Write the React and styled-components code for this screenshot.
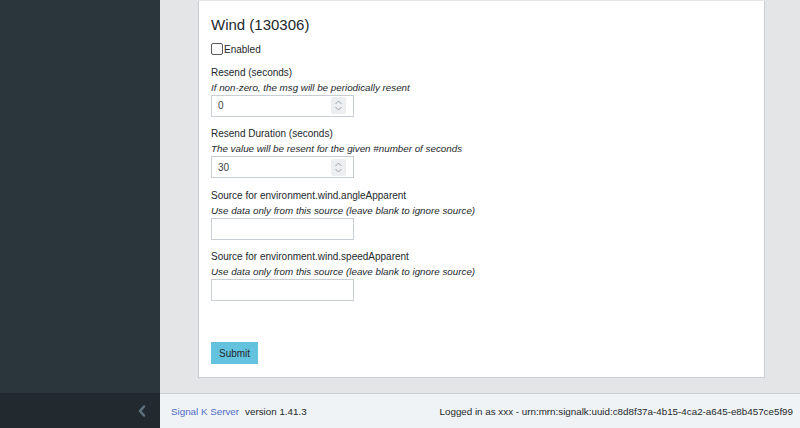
import React from 'react';
import styled, { createGlobalStyle } from 'styled-components';

const GlobalStyle = createGlobalStyle`
  html, body { margin: 0; padding: 0; }
  body {
    font-family: "Liberation Sans", Arial, sans-serif;
    color: #23282c;
    background: #e4e5e6;
  }
  * { box-sizing: border-box; }
`

const Layout = styled.div`
  display: grid;
  grid-template-columns: 160px 1fr;
  grid-template-rows: 1fr 35px;
  width: 800px;
  height: 428px;
  overflow: hidden;
`

const Sidebar = styled.div`
  background-color: #2b353c;
`

const Minimizer = styled.button`
  display: flex;
  align-items: center;
  justify-content: flex-end;
  padding: 0 14px 0 0;
  border: none;
  background-color: #232a2f;
  cursor: pointer;
`

const Main = styled.main`
  background-color: #e4e5e6;
  padding: 0 35px 15px 38px;
  display: flex;
  flex-direction: column;
  justify-content: flex-end;
  overflow: hidden;
`

const Card = styled.div`
  background: #fff;
  border: 1px solid #c8ced3;
  border-top: none;
  padding: 15px 12px 13px;
`

const Title = styled.h4`
  margin: 0 0 8px;
  font-size: 15px;
  line-height: 18px;
  font-weight: 400;
`

const CheckRow = styled.label`
  display: flex;
  align-items: center;
  height: 15px;
  font-size: 10px;
  margin-bottom: 8px;
`

const CheckBox = styled.span`
  width: 12px;
  height: 12px;
  border: 1px solid #5a5a5a;
  border-radius: 2px;
  margin-right: 1px;
  background: #fff;
`

const Group = styled.div`
  margin-bottom: ${p => p.last ? '41px' : '9.5px'};
`

const Label = styled.div`
  font-size: 10px;
  line-height: 15px;
`

const Help = styled.div`
  font-size: 9.8px;
  line-height: 15px;
  font-style: italic;
`

const Field = styled.div`
  display: flex;
  align-items: center;
  width: 143px;
  height: 22px;
  border: 1px solid #c8ced3;
  background: #fff;
  padding: 0 7px 0 6px;
`

const Input = styled.input`
  flex: 1;
  min-width: 0;
  border: none;
  outline: none;
  padding: 0;
  font-family: inherit;
  font-size: 10px;
  color: #3a4248;
  background: transparent;
`

const Spinner = styled.span`
  display: flex;
  align-items: center;
  justify-content: center;
  width: 15px;
  height: 17px;
  background: #eceef0;
  border-radius: 2px;
`

const Button = styled.button`
  height: 22px;
  padding: 0 7px;
  border: 1px solid #63c2de;
  background-color: #63c2de;
  color: #23282c;
  font-family: inherit;
  font-size: 10px;
`

const Footer = styled.footer`
  display: flex;
  align-items: center;
  justify-content: space-between;
  padding: 0 7px 0 11px;
  background: #f0f3f5;
  border-top: 1px solid #c8ced3;
  font-size: 9.8px;
  color: #23282c;
`

const Link = styled.a`
  color: #4f6ec6;
  text-decoration: none;
  margin-right: 6px;
`

const Chevron = () => (
  <svg width="8" height="12" viewBox="0 0 8 12">
    <path d="M6 1.5L2 6l4 4.5" fill="none" stroke="#5f7482" strokeWidth="2.4" strokeLinecap="round" strokeLinejoin="round" />
  </svg>
)

const SpinIcon = () => (
  <svg width="9" height="13" viewBox="0 0 9 13">
    <path d="M1.5 5L4.5 2l3 3M1.5 8l3 3 3-3" fill="none" stroke="#9aa3ab" strokeWidth="1" />
  </svg>
)

const fields = [
  { label: 'Resend (seconds)', help: 'If non-zero, the msg will be periodically resent', value: '0', number: true },
  { label: 'Resend Duration (seconds)', help: 'The value will be resent for the given #number of seconds', value: '30', number: true },
  { label: 'Source for environment.wind.angleApparent', help: 'Use data only from this source (leave blank to ignore source)', value: '' },
  { label: 'Source for environment.wind.speedApparent', help: 'Use data only from this source (leave blank to ignore source)', value: '' },
]

export default function App() {
  return (
    <Layout>
      <GlobalStyle />
      <Sidebar />
      <Main>
        <Card>
          <Title>Wind (130306)</Title>
          <CheckRow>
            <CheckBox />
            Enabled
          </CheckRow>
          {fields.map((f, i) => (
            <Group key={f.label} last={i === fields.length - 1}>
              <Label>{f.label}</Label>
              <Help>{f.help}</Help>
              <Field>
                <Input defaultValue={f.value} />
                {f.number && <Spinner><SpinIcon /></Spinner>}
              </Field>
            </Group>
          ))}
          <Button>Submit</Button>
        </Card>
      </Main>
      <Minimizer><Chevron /></Minimizer>
      <Footer>
        <span><Link href="#">Signal K Server</Link>version 1.41.3</span>
        <span>Logged in as xxx - urn:mrn:signalk:uuid:c8d8f37a-4b15-4ca2-a645-e8b457ce5f99</span>
      </Footer>
    </Layout>
  );
}
